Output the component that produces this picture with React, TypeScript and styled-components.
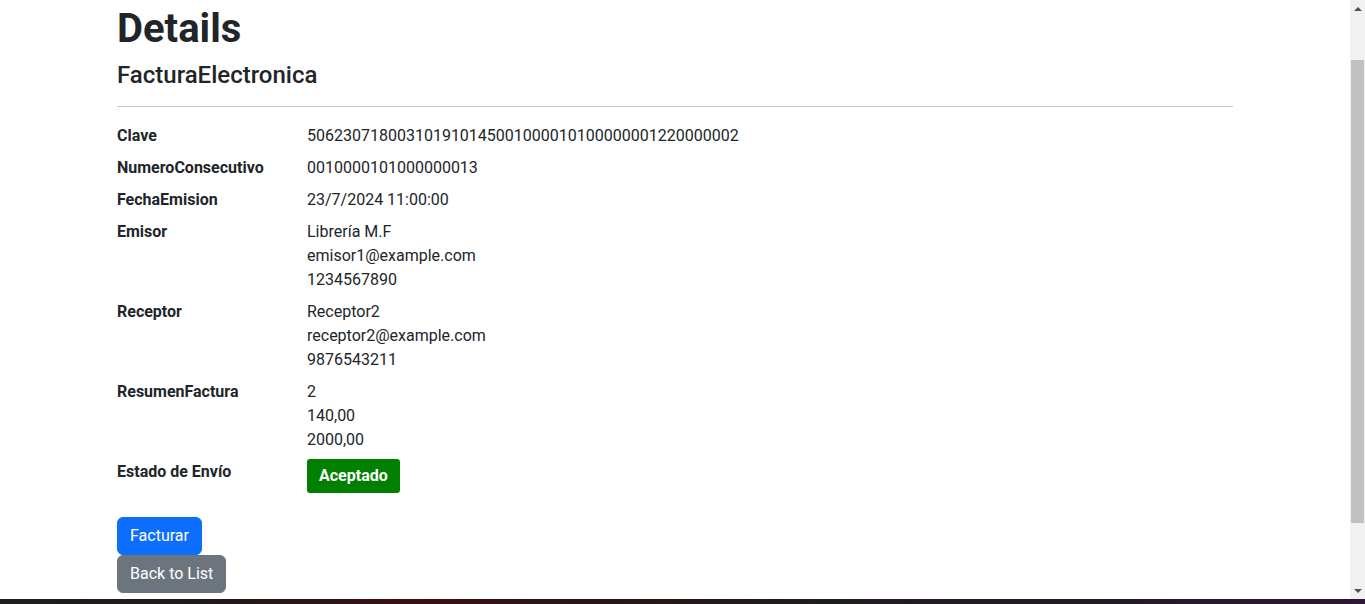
import React from "react";
import styled, { createGlobalStyle } from "styled-components";

const GlobalStyle = createGlobalStyle`
  html, body {
    margin: 0;
    padding: 0;
    overflow: hidden;
    background: #ffffff;
  }
  body {
    font-family: Roboto, "Open Sans", "Liberation Sans", sans-serif;
    font-size: 16px;
    line-height: 1.5;
    color: #212529;
  }
  * { box-sizing: border-box; }
`;

const Screen = styled.div`
  display: flex;
  flex-direction: column;
  width: 1365px;
  height: 604px;
`;

const Viewport = styled.div`
  display: flex;
  flex: 1;
  min-height: 0;
`;

const Page = styled.main`
  flex: 1;
  overflow: hidden;
`;

const Container = styled.div`
  max-width: 1140px;
  margin: 0 auto;
  padding: 5px 12px 0;
`;

const Title = styled.h1`
  margin: 0 0 8px;
  font-size: 40px;
  font-weight: 700;
  line-height: 1.2;
`;

const Subtitle = styled.h4`
  margin: 0;
  font-size: 24px;
  font-weight: 500;
  line-height: 1.2;
`;

const Rule = styled.hr`
  margin: 16px 0;
  border: 0;
  border-top: 1px solid #c8c8c8;
`;

const DetailList = styled.dl`
  display: grid;
  grid-template-columns: 190px 1fr;
  margin: 0 0 16px;
`;

const Term = styled.dt`
  font-weight: 700;
  margin: 0;
  padding-top: 1px;
`;

const Value = styled.dd`
  margin: 0 0 8px;
`;

const Line = styled.div`
  padding-top: 1px;
  margin-bottom: -1px;
`;

const Badge = styled.span`
  display: inline-block;
  padding: 5px 12px;
  background: #008000;
  color: #ffffff;
  font-weight: 700;
  border-radius: 3px;
`;

const Actions = styled.div`
  display: flex;
  flex-direction: column;
  align-items: flex-start;
`;

const Button = styled.button<{ $variant: "primary" | "secondary" }>`
  display: inline-block;
  padding: 6px 12px;
  font-family: inherit;
  font-size: 16px;
  line-height: 1.5;
  color: #ffffff;
  background: ${(p) => (p.$variant === "primary" ? "#0d6efd" : "#6c757d")};
  border: 1px solid ${(p) => (p.$variant === "primary" ? "#0d6efd" : "#6c757d")};
  border-radius: 6px;
  cursor: pointer;
`;

const Scrollbar = styled.div`
  width: 15px;
  display: flex;
  flex-direction: column;
  align-items: center;
  background: #f1f1f1;
  padding: 0 1px;
`;

const Arrow = styled.div<{ $dir: "up" | "down" }>`
  height: 17px;
  width: 100%;
  display: flex;
  align-items: center;
  justify-content: center;
  &::after {
    content: "";
    width: 0;
    height: 0;
    border-left: 4px solid transparent;
    border-right: 4px solid transparent;
    ${(p) =>
      p.$dir === "up"
        ? "border-bottom: 4px solid #505050;"
        : "border-top: 4px solid #505050;"}
  }
`;

const Track = styled.div`
  flex: 1;
  width: 100%;
  padding: 43px 0 59px;
  display: flex;
`;

const Thumb = styled.div`
  flex: 1;
  background: #c1c1c1;
`;

const Taskbar = styled.div`
  height: 5px;
  background: linear-gradient(
    90deg,
    #1e1e20 0%,
    #22181a 15%,
    #3a1013 30%,
    #2b1416 45%,
    #1f1c1f 60%,
    #241a26 80%,
    #2e1636 100%
  );
`;

const rows: { term: string; lines: string[] }[] = [
  { term: "Clave", lines: ["506230718003101910145001000010100000001220000002"] },
  { term: "NumeroConsecutivo", lines: ["0010000101000000013"] },
  { term: "FechaEmision", lines: ["23/7/2024 11:00:00"] },
  { term: "Emisor", lines: ["Librería M.F", "emisor1@example.com", "1234567890"] },
  { term: "Receptor", lines: ["Receptor2", "receptor2@example.com", "9876543211"] },
  { term: "ResumenFactura", lines: ["2", "140,00", "2000,00"] },
];

export default function App() {
  return (
    <>
      <GlobalStyle />
      <Screen>
        <Viewport>
          <Page>
            <Container>
              <Title>Details</Title>
              <Subtitle>FacturaElectronica</Subtitle>
              <Rule />
              <DetailList>
                {rows.map((r) => (
                  <React.Fragment key={r.term}>
                    <Term>{r.term}</Term>
                    <Value>
                      {r.lines.map((l) => (
                        <Line key={l}>{l}</Line>
                      ))}
                    </Value>
                  </React.Fragment>
                ))}
                <Term>Estado de Envío</Term>
                <Value>
                  <Badge>Aceptado</Badge>
                </Value>
              </DetailList>
              <Actions>
                <Button $variant="primary">Facturar</Button>
                <Button $variant="secondary">Back to List</Button>
              </Actions>
            </Container>
          </Page>
          <Scrollbar>
            <Arrow $dir="up" />
            <Track>
              <Thumb />
            </Track>
            <Arrow $dir="down" />
          </Scrollbar>
        </Viewport>
        <Taskbar />
      </Screen>
    </>
  );
}
